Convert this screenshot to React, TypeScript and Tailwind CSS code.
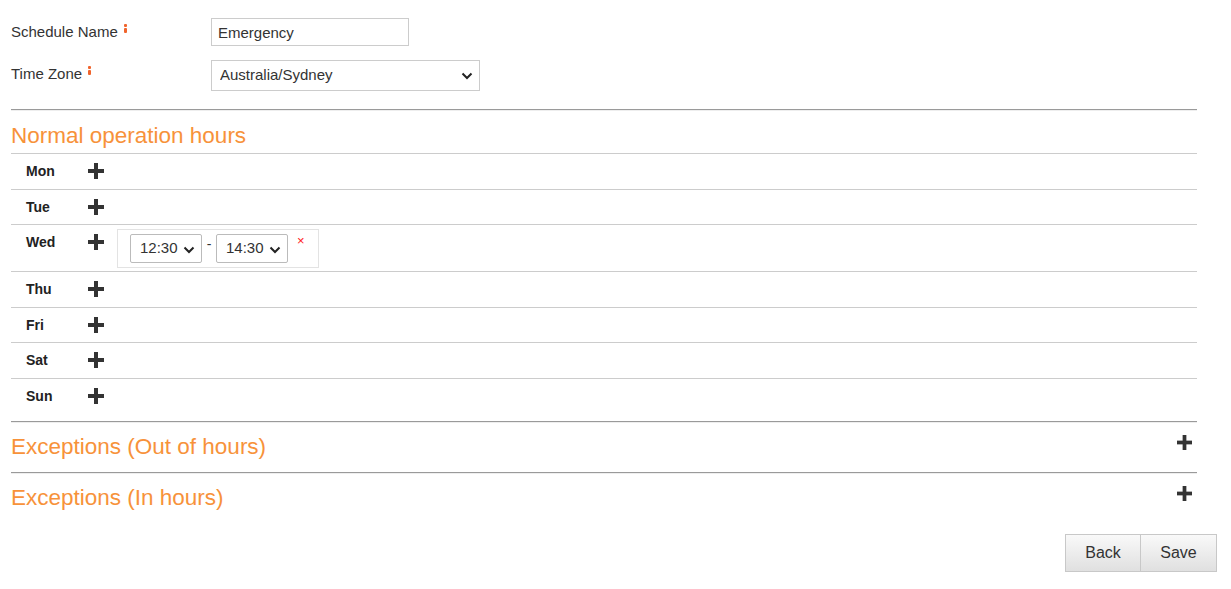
import React from "react";

function Plus({ size = 16 }: { size?: number }) {
  return (
    <svg width={size} height={size} viewBox="0 0 16 16" className="block">
      <rect x="6" y="0" width="4" height="16" fill="#333" />
      <rect x="0" y="6" width="16" height="4" fill="#333" />
    </svg>
  );
}

function Chevron() {
  return (
    <svg width="12" height="8" viewBox="0 0 12 8" className="block">
      <path d="M1.5 1.5 L6 6 L10.5 1.5" fill="none" stroke="#222" strokeWidth="2" />
    </svg>
  );
}

function Req() {
  return (
    <span className="absolute top-[1px] -right-[9px] flex flex-col items-center">
      <span className="block w-[3px] h-[3px] bg-[#f0642c] rounded-[1px]" />
      <span className="block w-[3px] h-[5px] mt-[1px] bg-[#f0642c] rounded-[1px]" />
    </span>
  );
}

function Hr() {
  return <div className="w-[1186px] border-t border-t-[#9a9a9a] border-b border-b-[#eeeeee]" />;
}

function TimeSelect({ value }: { value: string }) {
  return (
    <div className="relative w-[72px] h-[29px] border border-[#bbb] rounded-[2px] bg-white">
      <select
        defaultValue={value}
        className="appearance-none w-full h-full pl-[9px] text-[15px] text-[#333] bg-transparent outline-none"
      >
        <option>{value}</option>
      </select>
      <span className="absolute right-[6px] top-[11px] pointer-events-none">
        <Chevron />
      </span>
    </div>
  );
}

const days = ["Mon", "Tue", "Wed", "Thu", "Fri", "Sat", "Sun"];

export default function App() {
  return (
    <div
      className="w-[1231px] h-[589px] bg-white text-[#333] px-[11px] pt-[18px] text-[15px]"
      style={{ fontFamily: '"Liberation Sans", Arial, sans-serif' }}
    >
      {/* Schedule Name */}
      <div className="flex items-start">
        <div className="w-[200px] pt-[5px] text-[15px] leading-[18px]">
          <span className="relative">
            Schedule Name
            <Req />
          </span>
        </div>
        <input
          defaultValue="Emergency"
          className="w-[198px] h-[28px] border border-[#ccc] px-[6px] text-[15px] text-[#333] outline-none"
        />
      </div>

      {/* Time Zone */}
      <div className="flex items-start mt-[14px]">
        <div className="w-[200px] pt-[5px] text-[15px] leading-[18px]">
          <span className="relative">
            Time Zone
            <Req />
          </span>
        </div>
        <div className="relative w-[269px] h-[31px] border border-[#ccc] bg-white">
          <select
            defaultValue="Australia/Sydney"
            className="appearance-none w-full h-full pl-[8px] text-[15px] text-[#333] bg-transparent outline-none"
          >
            <option>Australia/Sydney</option>
          </select>
          <span className="absolute right-[6px] top-[11px] pointer-events-none">
            <Chevron />
          </span>
        </div>
      </div>

      <div className="mt-[18px]">
        <Hr />
      </div>

      <h2 className="text-[22.5px] leading-[26px] text-[#f7923a] pt-[12px] pb-[4px]">
        Normal operation hours
      </h2>

      <div className="w-[1186px] border-t border-[#ccc]">
        {days.map((d, i) => (
          <div
            key={d}
            className={`flex items-start ${i < days.length - 1 ? "border-b border-[#ccc]" : ""} ${
              d === "Wed" ? "" : "h-[35.5px]"
            }`}
          >
            <div className="w-[63px] pl-[15px] pt-[7px] text-[14px] leading-[20px] font-bold text-[#222]">
              {d}
            </div>
            <div className="w-[41px] pt-[9px] pl-[14px]">
              <Plus />
            </div>
            {d === "Wed" && (
              <div className="pt-[4px] pb-[3px] pl-[2px]">
                <div className="flex items-start border border-[#e3e3e3] pl-[12px] pr-[13px] py-[4px]">
                  <TimeSelect value="12:30" />
                  <span className="w-[14px] text-center text-[14px] leading-[16px] pt-[2px]">-</span>
                  <TimeSelect value="14:30" />
                  <span className="ml-[9px] text-[13px] leading-[14px] text-[#ff1a1a]">×</span>
                </div>
              </div>
            )}
          </div>
        ))}
      </div>

      <div className="mt-[7px]">
        <Hr />
      </div>

      <div className="w-[1186px] flex items-start justify-between pt-[11px] pb-[12px]">
        <h2 className="text-[22.5px] leading-[26px] text-[#f7923a]">Exceptions (Out of hours)</h2>
        <div className="pt-[1px] pr-[5px]">
          <Plus size={15} />
        </div>
      </div>

      <Hr />

      <div className="w-[1186px] flex items-start justify-between pt-[11px]">
        <h2 className="text-[22.5px] leading-[26px] text-[#f7923a]">Exceptions (In hours)</h2>
        <div className="pt-[1px] pr-[5px]">
          <Plus size={15} />
        </div>
      </div>

      <div className="flex justify-end w-[1206px] mt-[23px]">
        <button className="w-[76px] h-[38px] border border-[#c8c8c8] bg-gradient-to-b from-[#f9f9f9] to-[#e0e0e0] text-[16px] text-[#333]">
          Back
        </button>
        <button className="w-[76px] h-[38px] border border-l-0 border-[#c8c8c8] bg-gradient-to-b from-[#f9f9f9] to-[#e0e0e0] text-[16px] text-[#333]">
          Save
        </button>
      </div>
    </div>
  );
}
